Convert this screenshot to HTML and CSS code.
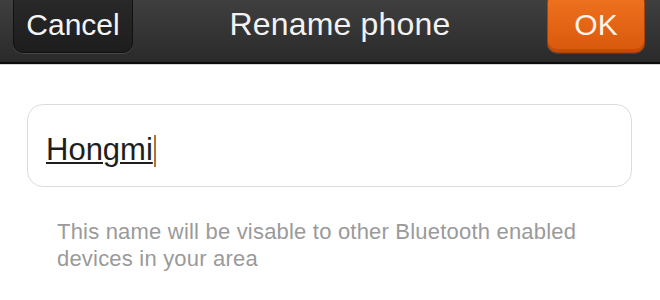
FILE: index.html
```html
<!DOCTYPE html>
<html>
<head>
<meta charset="utf-8">
<link rel="stylesheet" href="styles.css">
</head>
<body>
<header class="bar">
  <div class="btn btn-cancel">Cancel</div>
  <div class="title">Rename phone</div>
  <div class="btn btn-ok">OK</div>
</header>
<main class="content">
  <div class="field"><span class="value">Hongmi</span><span class="caret"></span></div>
  <p class="help">This name will be visable to other Bluetooth enabled devices in your area</p>
</main>
</body>
</html>
```
FILE: styles.css
```css
html, body {
  margin: 0;
  padding: 0;
  background: #ffffff;
  font-family: "Liberation Sans", Arial, sans-serif;
}
.bar {
  height: 62px;
  border-bottom: 2px solid #0c0c0c;
  box-shadow: 0 1px 0 #d8d8d8;
  background: linear-gradient(#3f3f3f, #2a2a2a);
  display: flex;
  align-items: flex-start;
  justify-content: space-between;
  padding: 0 15px 0 13px;
  overflow: hidden;
}
.btn {
  box-sizing: border-box;
  margin-top: -8px;
  height: 61px;
  border-radius: 10px;
  display: flex;
  align-items: center;
  justify-content: center;
  padding-top: 4px;
  font-size: 30px;
  line-height: 30px;
  color: #f4f4f4;
}
.btn-cancel {
  width: 120px;
  background: linear-gradient(#2a2a2a, #1d1d1d);
  border: 1px solid #111;
  box-shadow: 0 1px 0 rgba(255,255,255,0.12), inset 0 1px 0 rgba(255,255,255,0.06);
}
.btn-ok {
  width: 98px;
  background: linear-gradient(#f07420, #d9580c);
  border: 1px solid #a84406;
  box-shadow: 0 1px 0 rgba(255,255,255,0.1), inset 0 -3px 0 rgba(150,55,0,0.35);
  color: #fff4ea;
}
.title {
  padding-top: 6px;
  font-size: 32px;
  line-height: 36px;
  color: #f2f2f2;
  letter-spacing: 0.2px;
}
.content {
  padding: 40px 28px 0 27px;
}
.field {
  box-sizing: border-box;
  height: 83px;
  border: 1px solid #dcdcdc;
  border-radius: 16px;
  display: flex;
  align-items: center;
  padding: 8px 0 0 18px;
}
.value {
  font-size: 31px;
  line-height: 36px;
  color: #1e1e1e;
  text-decoration: underline;
  text-decoration-thickness: 2px;
  text-underline-offset: 2px;
}
.caret {
  width: 2px;
  height: 32px;
  margin-left: 1px;
  margin-top: 2px;
  background: #b8702c;
}
.help {
  margin: 31px 0 0 0;
  padding-left: 30px;
  width: 540px;
  font-size: 22px;
  line-height: 27px;
  letter-spacing: 0.2px;
  color: #9a9a9a;
}
```
